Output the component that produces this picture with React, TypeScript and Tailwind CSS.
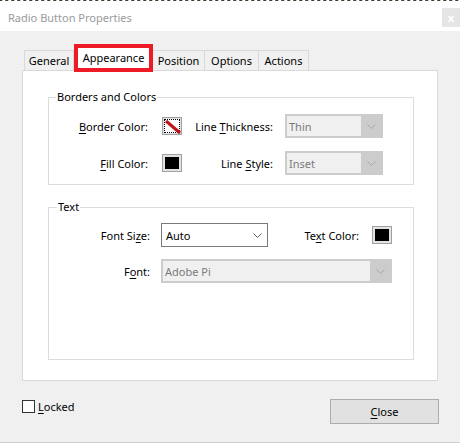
import React from "react";

const U = ({ c }: { c: string }) => <span className="underline underline-offset-2">{c}</span>;

const Chevron = ({ dim }: { dim?: boolean }) => (
  <svg width="9" height="5" viewBox="0 0 9 5" className="shrink-0">
    <polyline
      points="0.5,0.5 4.5,4.5 8.5,0.5"
      fill="none"
      stroke={dim ? "#a8a8a8" : "#5c5c5c"}
      strokeWidth="1"
    />
  </svg>
);

const DisabledSelect = ({ value, w }: { value: string; w: string }) => (
  <div className={`flex h-[24px] ${w} items-stretch bg-[#cccccc] p-[2px]`}>
    <div className="flex flex-1 items-center bg-[#f0f0f0] pl-[2px] text-[#7a7a7a]">{value}</div>
    <div className="flex w-[20px] items-center justify-center">
      <Chevron dim />
    </div>
  </div>
);

const Swatch = () => (
  <div className="h-[18px] w-[20px] border border-[#a0a0a0] bg-[#e3e3e3] p-[2px]">
    <div className="h-full w-full bg-black" />
  </div>
);

const Tab = ({ label, w, first }: { label: string; w: string; first?: boolean }) => (
  <div
    className={`flex h-[20px] ${w} items-center justify-center border-t border-r border-[#d9d9d9] bg-[#f0f0f0] ${
      first ? "border-l" : ""
    }`}
  >
    {label}
  </div>
);

export default function App() {
  return (
    <div className="flex h-[443px] w-[460px] flex-col bg-[#f0f0f0] font-['Noto_Sans',sans-serif] text-[11px] leading-none text-black">
      <div className="h-[1px] bg-[repeating-linear-gradient(90deg,#3a3a3a_0_2px,#f4c27a_2px_3px,#ffffff_3px_5px,#4a6fa5_5px_6px)]" />
      <div className="flex h-[30px] items-start justify-between bg-white">
        <span className="pl-[8px] pt-[11px] text-[#9a9a9a]">Radio Button Properties</span>
        <div className="mt-[7px] flex h-[19px] w-[18px] items-center justify-center bg-[#e5e5e5] text-[11px] font-bold text-white">
          x
        </div>
      </div>

      <div className="mt-[13px] flex h-[26px] items-end pl-[24px]">
        <Tab label="General" w="w-[50px]" first />
        <div className="relative z-10 -mb-[2px] flex h-[28px] w-[79px] items-center justify-center border-[4px] border-[#ed1c24] bg-white pb-[2px]">
          Appearance
        </div>
        <Tab label="Position" w="w-[52px]" />
        <Tab label="Options" w="w-[54px]" />
        <Tab label="Actions" w="w-[50px]" />
      </div>

      <div className="ml-[22px] flex h-[311px] w-[416px] flex-col border border-[#d9d9d9] bg-white">
        <div className="relative ml-[25px] mt-[26px] h-[88px] w-[366px] border border-[#dcdcdc]">
          <span className="absolute -top-[7px] left-[7px] bg-white px-[1px]">Borders and Colors</span>
          <div className="flex flex-col gap-[13px] pt-[16px]">
            <div className="flex h-[24px] items-center">
              <span className="w-[99px] text-right">
                <U c="B" />order Color:
              </span>
              <div className="ml-[14px] h-[18px] w-[20px] border border-[#a0a0a0] bg-[#e3e3e3] p-[1px]">
                <div className="h-full w-full border border-dotted border-black bg-white">
                  <svg width="16" height="14" viewBox="0 0 16 14">
                    <line x1="1" y1="1" x2="15" y2="13" stroke="#c0141b" strokeWidth="3.2" />
                  </svg>
                </div>
              </div>
              <span className="w-[91px] text-right">
                Line <U c="T" />hickness:
              </span>
              <div className="ml-[12px]">
                <DisabledSelect value="Thin" w="w-[98px]" />
              </div>
            </div>
            <div className="flex h-[24px] items-center">
              <span className="w-[99px] text-right">
                <U c="F" />ill Color:
              </span>
              <div className="ml-[14px]">
                <Swatch />
              </div>
              <span className="w-[91px] text-right">
                Line <U c="S" />tyle:
              </span>
              <div className="ml-[12px]">
                <DisabledSelect value="Inset" w="w-[98px]" />
              </div>
            </div>
          </div>
        </div>

        <div className="relative ml-[25px] mt-[22px] h-[153px] w-[366px] border border-[#dcdcdc]">
          <span className="absolute -top-[7px] left-[8px] bg-white px-[1px]">Text</span>
          <div className="flex flex-col gap-[12px] pt-[15px]">
            <div className="flex h-[24px] items-center">
              <span className="w-[101px] text-right">
                Font Si<U c="z" />e:
              </span>
              <div className="ml-[11px] flex h-[24px] w-[107px] items-center justify-between border border-[#7a7a7a] bg-white pl-[4px] pr-[5px]">
                <span>Auto</span>
                <Chevron />
              </div>
              <span className="w-[91px] text-right">
                Te<U c="x" />t Color:
              </span>
              <div className="ml-[13px]">
                <Swatch />
              </div>
            </div>
            <div className="flex h-[24px] items-center">
              <span className="w-[101px] text-right">
                F<U c="o" />nt:
              </span>
              <div className="ml-[11px]">
                <DisabledSelect value="Adobe Pi" w="w-[231px]" />
              </div>
            </div>
          </div>
        </div>
      </div>

      <div className="mt-[18px] flex items-start justify-between pl-[22px] pr-[21px]">
        <div className="mt-[1px] flex items-center">
          <div className="h-[13px] w-[13px] border border-[#333333] bg-white" />
          <span className="ml-[3px]">
            <U c="L" />ocked
          </span>
        </div>
        <div className="flex h-[25px] w-[109px] items-center justify-center border border-[#adadad] bg-[#e1e1e1]">
          <span>
            <U c="C" />lose
          </span>
        </div>
      </div>

      <div className="mt-auto h-[1px] bg-[#cfcfcf]" />
    </div>
  );
}
